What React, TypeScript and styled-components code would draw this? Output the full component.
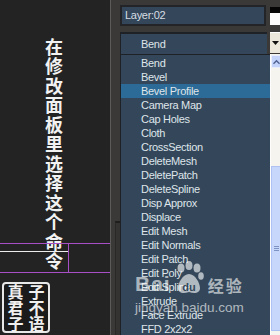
import React from 'react';
import styled, { createGlobalStyle } from 'styled-components';

const Global = createGlobalStyle`
  html, body { margin: 0; padding: 0; background: #232323; }
  body { width: 280px; height: 335px; overflow: hidden; }
`;

const Screen = styled.div`
  position: relative;
  width: 280px;
  height: 335px;
  display: flex;
  overflow: hidden;
  font-family: "Liberation Sans", Arial, sans-serif;
`;

/* ---------- left panel ---------- */
const LeftPanel = styled.div`
  position: relative;
  width: 110px;
  flex: none;
  background: #232323;
  display: flex;
  flex-direction: column;
  align-items: center;
`;

const Caption = styled.div`
  writing-mode: vertical-rl;
  font-family: "Noto Sans CJK SC", "Noto Sans", sans-serif;
  font-weight: 700;
  font-size: 18px;
  line-height: 20px;
  letter-spacing: 1.5px;
  color: #f2f2f2;
  margin-top: 38px;
  margin-right: 2px;
  height: 235px;
  position: relative;
  z-index: 1;
`;

const Guides = styled.div`
  position: absolute;
  left: 0;
  top: 243px;
  width: 110px;
  height: 30px;
  box-sizing: border-box;
  border-top: 1px solid #a94fc6;
  border-bottom: 1px solid #a94fc6;
  z-index: 2;
`;

const GuideCell = styled.div`
  width: 69px;
  height: 100%;
  border-right: 1px solid #a94fc6;
  padding-top: 7px;
  box-sizing: border-box;
`;

const WhiteRule = styled.div`
  height: 1px;
  background: #ececec;
`;

const Stamp = styled.div`
  align-self: flex-start;
  margin: 9px 0 0 2px;
  width: 48px;
  height: 51px;
  box-sizing: border-box;
  border: 2px solid #e8e8e8;
  border-radius: 4px;
  background: #1b1b1b;
  display: grid;
  grid-template-columns: repeat(2, 1fr);
  grid-auto-flow: column;
  grid-template-rows: repeat(3, 1fr);
  align-items: center;
  justify-items: center;
  padding: 0 1px;
  font-family: "Noto Sans CJK SC", sans-serif;
  font-weight: 700;
  font-size: 16px;
  line-height: 15px;
  color: #f0f0f0;
`;

const Divider = styled.div`
  width: 1px;
  flex: none;
  background: #5d5b59;
`;

const Strip = styled.div`
  width: 9px;
  flex: none;
  background: #3b3937;
  display: flex;
  flex-direction: column;
  justify-content: flex-end;
`;

const StripSlot = styled.div`
  height: 112px;
  margin-left: 4px;
  border-left: 1px solid #2a2927;
  border-top: 2px solid #1e1e1e;
  background: #353331;
`;

/* ---------- right panel ---------- */
const RightPanel = styled.div`
  flex: 1;
  min-width: 0;
  background: #3b3937;
  display: flex;
  flex-direction: column;
  padding-top: 5px;
`;

const Row = styled.div`
  display: flex;
  align-items: flex-start;
`;

const LayerBox = styled.div`
  width: 147px;
  height: 21px;
  box-sizing: border-box;
  border: 2px solid #222428;
  background: #34475a;
  color: #d6dde3;
  font-size: 11px;
  letter-spacing: -0.3px;
  line-height: 17px;
  padding-left: 3px;
`;

const Swatch = styled.div`
  margin: 2px 0 0 4px;
  width: 10px;
  height: 18px;
  display: flex;
  flex-direction: column;
`;

const SwatchTop = styled.div`
  height: 6px;
  background: #050505;
`;

const SwatchBottom = styled.div`
  flex: 1;
  background: #fbfbfb;
`;

const ComboRow = styled(Row)`
  margin-top: 6px;
`;

const Combo = styled.div`
  width: 147px;
  height: 22px;
  box-sizing: border-box;
  border-top: 2px solid #1e2125;
  border-left: 1px solid #1e2125;
  background: #34475a;
  color: #dde3e8;
  font-size: 11px;
  letter-spacing: -0.3px;
  line-height: 20px;
  padding-left: 20px;
`;

const ComboButton = styled.div`
  margin-left: 3px;
  width: 10px;
  height: 21px;
  background: #ece9dc;
  border-top: 1px solid #fff;
  box-sizing: border-box;
  display: flex;
  align-items: center;
  padding-left: 2px;
`;

const ListArea = styled.div`
  flex: 1;
  display: flex;
  min-height: 0;
`;

const List = styled.div`
  width: 150px;
  box-sizing: border-box;
  border-top: 1px solid #1e2125;
  border-left: 1px solid #1e2125;
  background: #34475a;
  padding-top: 1px;
  overflow: hidden;
`;

const Item = styled.div<{ $active?: boolean }>`
  height: 14px;
  line-height: 14px;
  padding-left: 20px;
  font-size: 11px;
  letter-spacing: -0.3px;
  color: #dfe5ea;
  white-space: nowrap;
  background: ${(p) => (p.$active ? '#2c6b97' : 'transparent')};
`;

const Scrollbar = styled.div`
  width: 10px;
  flex: none;
  border-left: 1px solid #fdfdfd;
  box-sizing: border-box;
  background: #f5f4ef;
  display: flex;
  flex-direction: column;
`;

const ScrollButton = styled.div`
  margin-top: 1px;
  height: 13px;
  background: #c4d4fb;
  border: 1px solid #e8eefc;
  border-right: none;
  box-sizing: border-box;
  display: flex;
  align-items: center;
  padding-left: 1px;
`;

const Track = styled.div`
  height: 98px;
`;

const Thumb = styled.div`
  height: 165px;
  background: #c7d6fb;
  border: 1px solid #aec3f3;
  border-right: none;
  box-sizing: border-box;
  display: flex;
  flex-direction: column;
  justify-content: center;
  gap: 1px;
  padding-left: 2px;
`;

const Grip = styled.div`
  width: 5px;
  height: 1px;
  background: #7d93c4;
`;

/* ---------- watermark ---------- */
const Watermark = styled.div`
  position: absolute;
  left: 135px;
  top: 261px;
  width: 120px;
  color: rgba(255, 255, 255, 0.62);
  font-family: "Liberation Sans", Arial, sans-serif;
  pointer-events: none;
  z-index: 5;
`;

const BrandLine = styled.div`
  display: flex;
  align-items: flex-end;
  height: 34px;
`;

const Bai = styled.span`
  font-size: 21px;
  font-weight: 700;
  line-height: 21px;
  letter-spacing: 1px;
  margin-bottom: 1px;
`;

const Paw = styled.svg`
  width: 30px;
  height: 34px;
  margin-left: 3px;
`;

const Jingyan = styled.span`
  font-family: "Noto Sans CJK SC", sans-serif;
  font-weight: 700;
  font-size: 16px;
  line-height: 16px;
  margin: 0 0 2px 4px;
  letter-spacing: 2px;
`;

const Url = styled.div`
  font-size: 13.5px;
  line-height: 16px;
  margin-top: 5px;
`;

const items = [
  'Bend', 'Bevel', 'Bevel Profile', 'Camera Map', 'Cap Holes', 'Cloth',
  'CrossSection', 'DeleteMesh', 'DeletePatch', 'DeleteSpline', 'Disp Approx',
  'Displace', 'Edit Mesh', 'Edit Normals', 'Edit Patch', 'Edit Poly',
  'Edit Spline', 'Extrude', 'Face Extrude', 'FFD 2x2x2',
];

const wm = 'rgba(255,255,255,0.62)';

export default function App() {
  return (
    <>
      <Global />
      <Screen>
        <LeftPanel>
          <Caption>在修改面板里选择这个命令</Caption>
          <Guides>
            <GuideCell>
              <WhiteRule />
            </GuideCell>
          </Guides>
          <Stamp>
            <span>真</span>
            <span>君</span>
            <span>子</span>
            <span>子</span>
            <span>不</span>
            <span>语</span>
          </Stamp>
        </LeftPanel>
        <Divider />
        <Strip>
          <StripSlot />
        </Strip>
        <RightPanel>
          <Row>
            <LayerBox>Layer:02</LayerBox>
            <Swatch>
              <SwatchTop />
              <SwatchBottom />
            </Swatch>
          </Row>
          <ComboRow>
            <Combo>Bend</Combo>
            <ComboButton>
              <svg width="7" height="4" viewBox="0 0 7 4">
                <path d="M0 0 H7 L3.5 4 Z" fill="#111" />
              </svg>
            </ComboButton>
          </ComboRow>
          <ListArea>
            <List>
              {items.map((it) => (
                <Item key={it} $active={it === 'Bevel Profile'}>
                  {it}
                </Item>
              ))}
            </List>
            <Scrollbar>
              <ScrollButton>
                <svg width="8" height="6" viewBox="0 0 8 6">
                  <path d="M0.5 5 L4 1.5 L7.5 5" fill="none" stroke="#4d6190" strokeWidth="1.6" />
                </svg>
              </ScrollButton>
              <Track />
              <Thumb>
                <Grip />
                <Grip />
                <Grip />
              </Thumb>
            </Scrollbar>
          </ListArea>
        </RightPanel>
        <Watermark>
          <BrandLine>
            <Bai>Bai</Bai>
            <Paw viewBox="0 0 30 34">
              <ellipse cx="7" cy="7" rx="3.5" ry="4.5" fill={wm} />
              <ellipse cx="15" cy="4.5" rx="3.5" ry="4.5" fill={wm} />
              <ellipse cx="23" cy="7" rx="3.5" ry="4.5" fill={wm} />
              <ellipse cx="27" cy="15" rx="2.8" ry="3.8" fill={wm} />
              <path d="M15 13 C9 13 4 22 4 27 C4 32 9 33 15 31 C21 33 26 32 26 27 C26 22 21 13 15 13 Z" fill={wm} />
              <text x="15" y="30" textAnchor="middle" fontSize="11" fontWeight="700" fontFamily="Liberation Sans, Arial, sans-serif" fill="#34475a">du</text>
            </Paw>
            <Jingyan>经验</Jingyan>
          </BrandLine>
          <Url>jingyan.baidu.com</Url>
        </Watermark>
      </Screen>
    </>
  );
}
